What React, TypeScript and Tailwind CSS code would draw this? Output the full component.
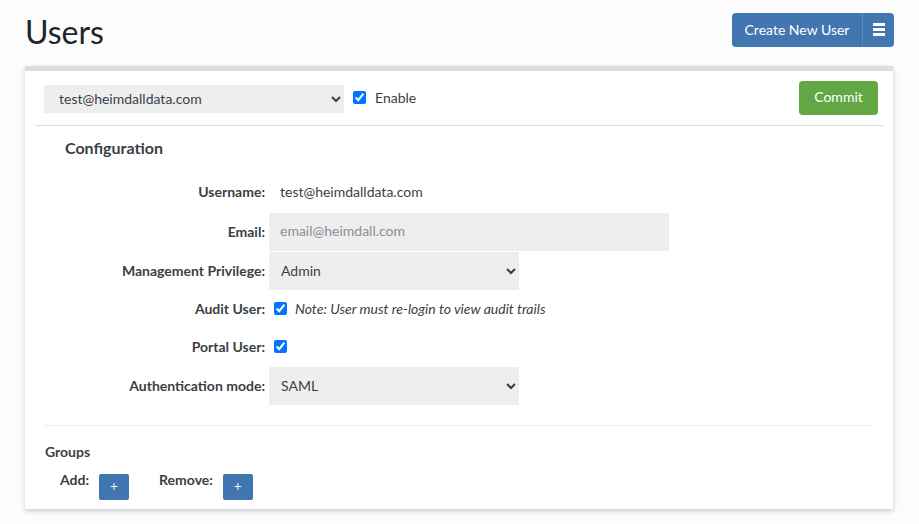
import React from 'react';

const labelClass = 'mb-[2px] w-[244px] shrink-0 pr-1 text-right text-[14px] font-bold text-[#3a3f44]';
const selectClass = 'h-[38px] w-[250px] rounded-none border-0 bg-[#eeeeee] pb-[2px] pl-2 text-[14px] text-[#3a3f44] outline-none';

const Row = ({ label, className, children }: { label: string; className: string; children: React.ReactNode }) => (
    <div className={`flex items-center ${className}`}>
        <div className={labelClass}>{label}</div>
        {children}
    </div>
);

const PlusButton = () => (
    <button className="flex h-[26px] w-[30px] items-center justify-center rounded-[2px] bg-[#4276b0] text-[13px] text-white">+</button>
);

export default function App() {
    return (
        <div className="h-[524px] w-[919px] overflow-hidden bg-[#fcfcfc] font-['Lato','Carlito','Open_Sans',sans-serif] text-[14px] text-[#3a3f44]">
            <div className="flex items-start justify-between pl-[25px] pr-[25px] pt-[13px]">
                <h1 className="text-[32px] leading-[38px] font-normal text-[#212529]">Users</h1>
                <div className="flex h-[34px] w-[162px] overflow-hidden rounded-[4px] bg-[#4276b0] text-white">
                    <button className="flex-1 border-r border-[#5a88bb] pb-[2px] text-[14px]">Create New User</button>
                    <button className="flex w-[31px] flex-col items-center justify-center gap-[2px] pb-[2px]">
                        <span className="h-[3px] w-[12px] bg-white" />
                        <span className="h-[3px] w-[12px] bg-white" />
                        <span className="h-[3px] w-[12px] bg-white" />
                    </button>
                </div>
            </div>

            <div className="mt-[15px] mr-[26px] ml-[25px] h-[443px] border-t-[5px] border-[#dddddd] bg-white shadow-[0_2px_5px_rgba(0,0,0,0.2)]">
                <div className="mx-[10px] flex h-[55px] items-center border-b border-[#dddddd] pl-[9px] pr-[5px]">
                    <select className="mt-[2px] h-[28px] w-[300px] rounded-none border-0 bg-[#eeeeee] pb-[2px] pl-[11px] text-[14px] text-[#3a3f44] outline-none">
                        <option>test@heimdalldata.com</option>
                    </select>
                    <input type="checkbox" defaultChecked className="mb-[2px] ml-[9px] h-[13px] w-[13px]" />
                    <span className="mb-[2px] ml-[9px]">Enable</span>
                    <button className="ml-auto h-[34px] w-[79px] rounded-[4px] bg-[#62a744] pb-[3px] text-[14px] text-white">Commit</button>
                </div>

                <h2 className="mt-[12px] ml-[40px] text-[16px] leading-[20px] font-bold">Configuration</h2>

                <div className="mt-[24px] flex flex-col">
                    <Row label="Username:" className="h-[20px]">
                        <span className="mb-[2px] ml-[11px]">test@heimdalldata.com</span>
                    </Row>
                    <Row label="Email:" className="mt-[11px] h-[38px]">
                        <input placeholder="email@heimdall.com" className="h-[38px] w-[400px] bg-[#eeeeee] px-[11px] pb-[3px] text-[14px] outline-none placeholder:text-[#868e96]" />
                    </Row>
                    <Row label="Management Privilege:" className="mt-[1px] h-[38px]">
                        <select className={selectClass}><option>Admin</option></select>
                    </Row>
                    <Row label="Audit User:" className="mt-[9px] h-[20px]">
                        <input type="checkbox" defaultChecked className="mb-[2px] ml-[5px] h-[13px] w-[13px]" />
                        <em className="mb-[2px] ml-[8px]">Note: User must re-login to view audit trails</em>
                    </Row>
                    <Row label="Portal User:" className="mt-[18px] h-[20px]">
                        <input type="checkbox" defaultChecked className="mb-[2px] ml-[5px] h-[13px] w-[13px]" />
                    </Row>
                    <Row label="Authentication mode:" className="mt-[10px] h-[38px]">
                        <select className={selectClass}><option>SAML</option></select>
                    </Row>
                </div>

                <div className="mx-[19px] mt-[20px] border-t border-[#eeeeee]" />

                <div className="mt-[17px] ml-[20px] text-[14px] leading-[18px] font-bold">Groups</div>
                <div className="mt-[10px] ml-[35px] flex items-start">
                    <span className="leading-[18px] font-bold">Add:</span>
                    <div className="mt-[3px] ml-[10px]"><PlusButton /></div>
                    <span className="ml-[30px] leading-[18px] font-bold">Remove:</span>
                    <div className="mt-[3px] ml-[10px]"><PlusButton /></div>
                </div>
            </div>
        </div>
    );
}
